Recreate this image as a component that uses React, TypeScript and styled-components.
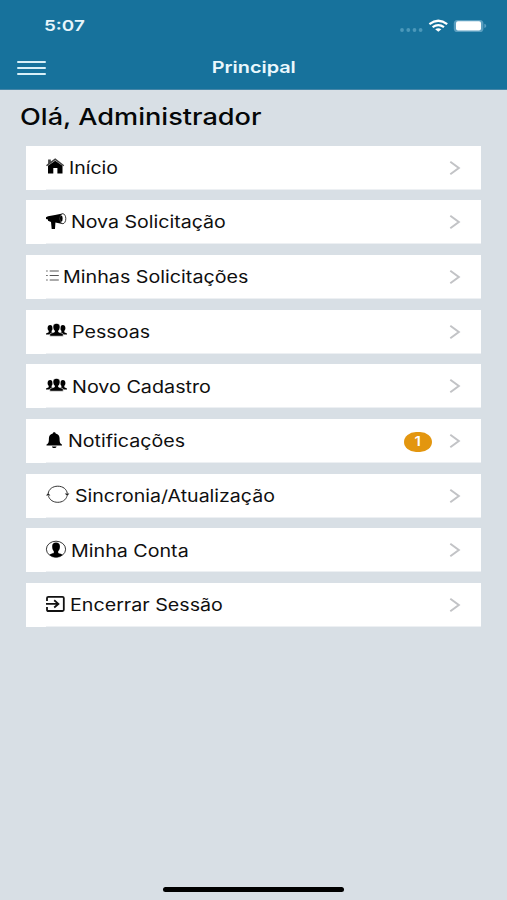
import React from "react";
import styled, { createGlobalStyle } from "styled-components";

const GlobalStyle = createGlobalStyle`
  * { box-sizing: border-box; }
  body { margin: 0; background: #d8dfe5; font-family: Inter, "Liberation Sans", sans-serif; }
`;

const Screen = styled.div`
  display: flex;
  flex-direction: column;
  width: 507px;
  height: 900px;
  overflow: hidden;
  background: #d8dfe5;
`;

const Header = styled.header`
  flex: none;
  height: 89.5px;
  background: #17729c;
  border-bottom: 1px solid #4686a8;
  color: #fff;
`;

const StatusBar = styled.div`
  display: flex;
  align-items: center;
  justify-content: space-between;
  height: 44px;
  padding: 8px 20px 0 43.5px;
`;

const StatusIcons = styled.div`
  display: flex;
  align-items: center;
  svg { display: block; }
`;

const NavBar = styled.div`
  display: grid;
  grid-template-columns: 60px 1fr 60px;
  align-items: center;
  height: 46px;
`;

const MenuButton = styled.button`
  display: flex;
  flex-direction: column;
  gap: 4px;
  width: 29px;
  margin: 1px 0 0 16.5px;
  padding: 0;
  border: 0;
  background: none;
`;

const MenuLine = styled.span`
  height: 2px;
  border-radius: 1px;
  background: #d9f0f8;
`;

const Wide = styled.span<{ $stretch: number; $origin?: string }>`
  display: inline-block;
  white-space: nowrap;
  transform: scaleX(${(p) => p.$stretch});
  transform-origin: ${(p) => p.$origin ?? "left"} center;
`;

const Clock = styled.div`
  font-size: 15.2px;
  font-weight: 600;
  line-height: 20px;
  color: #e6f5fb;
`;

const NavTitle = styled.h1`
  margin: 0;
  text-align: center;
  font-size: 16.4px;
  font-weight: 600;
  line-height: 22px;
  color: #eaf8fd;
`;

const Greeting = styled.h2`
  margin: 0;
  padding: 12px 0 0 20.4px;
  height: 56px;
  font-size: 23px;
  font-weight: 500;
  line-height: 31px;
  color: #050708;
`;

const Menu = styled.nav`
  display: flex;
  flex-direction: column;
  gap: 10.7px;
  padding: 0 26px;
`;

const Row = styled.a`
  display: flex;
  align-items: center;
  height: 44px;
  padding: 0 20px;
  background:
    linear-gradient(#edf0f3, #edf0f3) 20px 100% / 100% 1px no-repeat,
    #fff;
  color: #101010;
  font-size: 16.6px;
  line-height: 22px;
`;

const IconSlot = styled.span<{ $width: number }>`
  flex: none;
  width: ${(p) => p.$width}px;
  height: 22px;
  padding-top: 0.6px;
  svg { display: block; overflow: visible; }
`;

const RowLabel = styled.span`
  flex: 1;
  min-width: 0;
  padding-top: 0.6px;
`;

const Badge = styled.span`
  display: flex;
  align-items: center;
  justify-content: center;
  width: 28px;
  height: 20px;
  margin: 3px 17px 0 0;
  border-radius: 12px / 10px;
  background: #e3960f;
  color: #fff;
  font-size: 12.5px;
  font-weight: 600;
  line-height: 20px;
`;

const Chevron = styled.svg`
  display: block;
  flex: none;
  width: 12px;
  height: 14px;
`;

const HomeBar = styled.div`
  align-self: center;
  flex: none;
  width: 181px;
  height: 5px;
  margin: auto 0 8px;
  border-radius: 3px;
  background: #000;
`;

const HomeIcon = () => (
  <svg width="19" height="22">
    <path d="M0 8.3L2.1 6.5V2.6H4.8V4.4L9.2 1.2L18.2 8.3L17.4 9.2L9.2 3.2L1 9.2Z" fill="#444" />
    <path d="M2 8.8L9.2 3.7L16.5 8.8V16.4H11.4V11H7.3V16.4H2Z" />
  </svg>
);

const MegaphoneIcon = () => (
  <svg width="20" height="22">
    <path d="M0 5.2L2 4.2L9 2.9L16.5 1.4V12L9.4 10.6L9 17H5.7L5 10L2 8.8V7.6L0 7Z" />
    <ellipse cx="16.8" cy="6.7" rx="3" ry="5" fill="#fff" stroke="#222" strokeWidth=".9" />
    <ellipse cx="15.3" cy="6.7" rx="1.3" ry="3.1" />
  </svg>
);

const ListIcon = () => (
  <svg width="13" height="22" stroke="#555" strokeWidth="1">
    <path d="M3.7 5H12.8M3.7 9.5H12.8M3.7 14H12.8" />
    <path d="M.2 5H1.7M.2 9.5H1.7M.2 14H1.7" />
  </svg>
);

const PeopleIcon = () => (
  <svg width="21" height="22">
    <path d="M0 13.6V12.4L2.7 11.2V9.8C1.8 9 1.6 8 1.6 6.9C1.6 5 2.6 4 4.1 4S6.6 5 6.6 6.9C6.6 8 6.4 9 5.6 9.8V11.2L7 12V13.6Z" />
    <path d="M21 13.6V12.4L18.3 11.2V9.8C19.2 9 19.4 8 19.4 6.9C19.4 5 18.4 4 16.9 4S14.4 5 14.4 6.9C14.4 8 14.6 9 15.4 9.8V11.2L14 12V13.6Z" />
    <path d="M3.8 15.2V13.2Q3.8 12.7 4.6 12.4L8.5 11V9.8C7.2 8.6 7 7.3 7 5.8C7 3.5 8.2 2.4 10.5 2.4S14 3.5 14 5.8C14 7.3 13.8 8.6 12.5 9.8V11L16.4 12.4Q17.2 12.7 17.2 13.2V15.2Z" stroke="#fff" strokeWidth=".6" />
  </svg>
);

const BellIcon = () => (
  <svg width="17" height="22">
    <path d="M8.2 1.3C9.1 1.3 9.5 1.8 9.7 2.5C12.4 3.1 13.6 5 13.6 7.5C13.6 11.8 14.2 12.6 16 13.6V14.6H.5V13.6C2.3 12.6 2.9 11.8 2.9 7.5C2.9 5 4.1 3.1 6.8 2.5C7 1.8 7.3 1.3 8.2 1.3ZM5.9 15.4H10.6C10.2 16.6 9.4 17 8.2 17S6.3 16.6 5.9 15.4Z" />
  </svg>
);

const SyncIcon = () => (
  <svg width="24" height="22" fill="none" stroke="#333" strokeWidth="1">
    <path d="M2.2 8.4C2.8 4.2 6.6 1.2 11.8 1.2S20.7 4.2 21.3 8.4M21 11.2C19.7 15 16.4 17.3 11.8 17.3S3.7 15 2.5 11.2" />
    <path d="M0 10.4L2.2 7.9L4.4 10.4ZM18.8 8.6L21.2 11.1L23.4 8.6Z" fill="#222" stroke="none" />
  </svg>
);

const AccountIcon = () => (
  <svg width="21" height="22">
    <ellipse cx="10" cy="9.2" rx="9.6" ry="8" fill="#fff" stroke="#222" strokeWidth=".9" />
    <path d="M3.6 15C4.6 13.2 7.8 13.7 7.8 12.4V11.2C6.4 9.8 6.2 8.2 6.2 6C6.2 3.8 7.6 2.6 10 2.6S13.9 3.8 13.9 6C13.9 8.2 13.7 9.8 12.2 11.2V12.4C12.2 13.7 15.4 13.2 16.5 15C14.4 16.6 12 17.3 10 17.3S5.7 16.6 3.6 15Z" />
  </svg>
);

const ExitIcon = () => (
  <svg width="20" height="22" fill="none" stroke="#111" strokeWidth="1.8">
    <path d="M1 6V3Q1 1.8 2.4 1.8H16.4Q17.8 1.8 17.8 3V14.8Q17.8 16 16.4 16H2.4Q1 16 1 14.8V12" />
    <path d="M0 8.9H12M8.2 5.3L12.4 8.9L8.2 12.5" />
  </svg>
);

type Item = { label: string; icon: React.FC; slot: number; stretch: number; badge?: number };

const items: Item[] = [
  { label: "Início", icon: HomeIcon, slot: 23.2, stretch: 1.175 },
  { label: "Nova Solicitação", icon: MegaphoneIcon, slot: 25.1, stretch: 1.18 },
  { label: "Minhas Solicitações", icon: ListIcon, slot: 17.3, stretch: 1.187 },
  { label: "Pessoas", icon: PeopleIcon, slot: 26.3, stretch: 1.185 },
  { label: "Novo Cadastro", icon: PeopleIcon, slot: 26.3, stretch: 1.19 },
  { label: "Notificações", icon: BellIcon, slot: 22.3, stretch: 1.185, badge: 1 },
  { label: "Sincronia/Atualização", icon: SyncIcon, slot: 28.7, stretch: 1.178 },
  { label: "Minha Conta", icon: AccountIcon, slot: 25.3, stretch: 1.185 },
  { label: "Encerrar Sessão", icon: ExitIcon, slot: 23.6, stretch: 1.185 },
];

export default function App() {
  return (
    <Screen>
      <GlobalStyle />
      <Header>
        <StatusBar>
          <Clock><Wide $stretch={1.24}>5:07</Wide></Clock>
          <StatusIcons>
            <svg width="87" height="20" viewBox="400 16 87 20">
              <g fill="#4b98ba">
                <circle cx="402" cy="30" r="1.9" />
                <circle cx="408.3" cy="30" r="1.9" />
                <circle cx="414.5" cy="30" r="1.9" />
                <circle cx="420.6" cy="30" r="1.9" />
              </g>
              <g fill="none" stroke="#fff" strokeWidth="2.2">
                <path d="M429.4 24.2Q438.3 17.3 447.2 24.2" />
                <path d="M432.6 27.2Q438.3 23 444 27.2" />
              </g>
              <path d="M435.2 29.2Q438.3 27.2 441.4 29.2L438.3 31.8Z" fill="#fff" />
              <rect x="453.8" y="20" width="29.6" height="12" rx="3.6" fill="#5b9fc0" />
              <rect x="456" y="21.3" width="25" height="9.2" rx="2" fill="#fff" />
              <path d="M484.3 23.8Q486.3 24.3 486.3 25.9T484.3 28Z" fill="#5b9fc0" />
            </svg>
          </StatusIcons>
        </StatusBar>
        <NavBar>
          <MenuButton aria-label="Menu">
            <MenuLine /><MenuLine /><MenuLine />
          </MenuButton>
          <NavTitle><Wide $stretch={1.21} $origin="center">Principal</Wide></NavTitle>
        </NavBar>
      </Header>
      <Greeting><Wide $stretch={1.18}>Olá, Administrador</Wide></Greeting>
      <Menu>
        {items.map(({ label, icon: Icon, slot, stretch, badge }) => (
          <Row key={label}>
            <IconSlot $width={slot}><Icon /></IconSlot>
            <RowLabel><Wide $stretch={stretch}>{label}</Wide></RowLabel>
            {badge && <Badge><Wide $stretch={1.2} $origin="center">{badge}</Wide></Badge>}
            <Chevron viewBox="0 0 12 14" fill="none" stroke="#c2c3c6" strokeWidth="2">
              <path d="M1.3 .8L9.8 7L1.3 13.2" />
            </Chevron>
          </Row>
        ))}
      </Menu>
      <HomeBar />
    </Screen>
  );
}
